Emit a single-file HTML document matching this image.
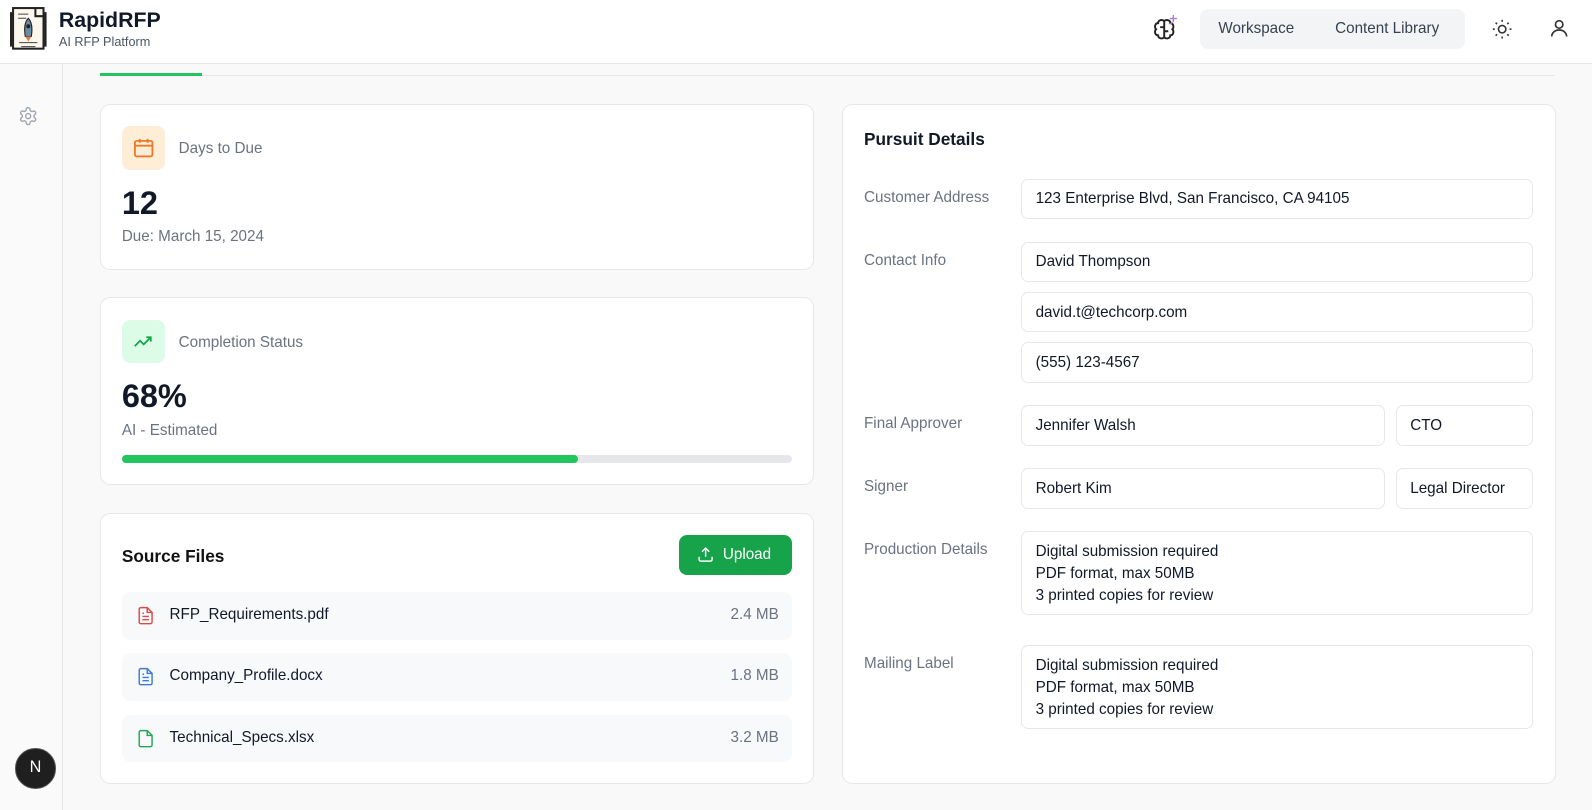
<!DOCTYPE html>
<html><head><meta charset="utf-8"><style>
*{box-sizing:border-box;margin:0;padding:0}
html,body{width:1592px;height:810px;overflow:hidden}
body{zoom:1.01531;font-family:"Liberation Sans",sans-serif;background:#f9f9f9;color:#111827;width:1568px;height:798px;position:relative}
.a{position:absolute}
.hdr{left:0;top:0;width:1568px;height:63px;background:#fff;border-bottom:1px solid #e5e7eb}
.side{left:0;top:63px;width:62px;height:735px;background:#fafafa;border-right:1px solid #e5e7eb}
.card{background:#fff;border:1px solid #e5e7eb;border-radius:10px}
.lbl{font-size:15px;color:#6b7280}
.inp{position:absolute;background:#fff;border:1px solid #e5e7eb;border-radius:7px;font-size:15px;color:#111827;padding:0 13px;display:flex;align-items:center}
.ta{align-items:flex-start;padding-top:9px;line-height:21.5px}
.row{position:absolute;left:120px;width:660px;height:47px;background:#f8f9fa;border-radius:8px;font-size:15px}
.row .n{position:absolute;left:47px;top:14px}
.row .s{position:absolute;right:13px;top:14px;color:#6b7280}
.row svg{position:absolute;left:14px;top:13px}
</style></head><body>
<div class="a hdr">
 <svg class="a" style="left:9px;top:4px" width="40" height="48" viewBox="0 0 40 48"><rect x="4" y="4" width="30" height="40" fill="#fbf7ec" stroke="#222" stroke-width="2"/><path d="M26 4v8h8" fill="none" stroke="#222" stroke-width="2"/><path d="M9 10h10M9 14h8M10 38h18M12 42h14" stroke="#444" stroke-width="1"/><path d="M19 14c4 4 4 12 3 18h-6c-1-6-1-14 3-18z" fill="#6a8aa8" stroke="#222"/><circle cx="19" cy="22" r="2" fill="#222"/><path d="M16 32l3 5 3-5" fill="#d9824b"/><path d="M2 8v34M36 8v34" stroke="#222" stroke-width="2"/></svg>
 <div class="a" style="left:58px;top:8px;font-size:21px;font-weight:bold">RapidRFP</div>
 <div class="a" style="left:58px;top:34px;font-size:12.5px;color:#4b5563">AI RFP Platform</div>
 <svg class="a" style="left:1133px;top:13px" width="30" height="30" viewBox="0 0 30 30" fill="none" stroke="#222" stroke-width="1.9"><path d="M14 8c-2-2-6-1-6 2-3 0-4 4-2 6-2 2-1 6 2 6 0 3 4 4 6 2V8zM14 8c2-2 6-1 6 2 3 0 4 4 2 6 2 2 1 6-2 6 0 3-4 4-6 2"/><path d="M10 14h4M14 18h4"/><path d="M23 2v7M19.5 5.5h7M20 11l2-2" stroke="#b07ad8" stroke-width="1.4"/></svg>
 <div class="a" style="left:1182px;top:9px;width:261px;height:39px;background:#f3f4f6;border-radius:8px;font-size:15px;color:#374151">
  <span class="a" style="left:18px;top:11px">Workspace</span><span class="a" style="left:133px;top:11px">Content Library</span></div>
 <svg class="a" style="left:1469px;top:18px" width="22" height="22" viewBox="0 0 24 24" fill="none" stroke="#333" stroke-width="1.7"><circle cx="12" cy="12" r="4"/><path d="M12 2v2M12 20v2M2 12h2M20 12h2M5 5l1.5 1.5M17.5 17.5L19 19M5 19l1.5-1.5M17.5 6.5L19 5"/></svg>
 <svg class="a" style="left:1525px;top:17px" width="22" height="22" viewBox="0 0 24 24" fill="none" stroke="#333" stroke-width="1.8"><circle cx="12" cy="8" r="4"/><path d="M4 21c0-4 3.5-7 8-7s8 3 8 7"/></svg>
</div>
<div class="a side"></div>
<svg class="a" style="left:18px;top:104px" width="20" height="20" viewBox="0 0 24 24" fill="none" stroke="#9ca3af" stroke-width="1.6"><circle cx="12" cy="12" r="3"/><path d="M12.2 2h-.4a2 2 0 0 0-2 2v.2a2 2 0 0 1-1 1.7l-.4.3a2 2 0 0 1-2 0l-.2-.1a2 2 0 0 0-2.7.7l-.2.4a2 2 0 0 0 .7 2.7l.2.1a2 2 0 0 1 1 1.7v.5a2 2 0 0 1-1 1.7l-.2.1a2 2 0 0 0-.7 2.7l.2.4a2 2 0 0 0 2.7.7l.2-.1a2 2 0 0 1 2 0l.4.3a2 2 0 0 1 1 1.7V20a2 2 0 0 0 2 2h.4a2 2 0 0 0 2-2v-.2a2 2 0 0 1 1-1.7l.4-.3a2 2 0 0 1 2 0l.2.1a2 2 0 0 0 2.7-.7l.2-.4a2 2 0 0 0-.7-2.7l-.2-.1a2 2 0 0 1-1-1.7v-.5a2 2 0 0 1 1-1.7l.2-.1a2 2 0 0 0 .7-2.7l-.2-.4a2 2 0 0 0-2.7-.7l-.2.1a2 2 0 0 1-2 0l-.4-.3a2 2 0 0 1-1-1.7V4a2 2 0 0 0-2-2z"/></svg>
<div class="a" style="left:15px;top:737px;width:40px;height:40px;border-radius:50%;background:#1f1f1f;border:1.5px solid #555;color:#fff;font-size:16px;text-align:center;line-height:37px">N</div>
<div class="a" style="left:98px;top:74px;width:1434px;height:1px;background:#e5e7eb"></div>
<div class="a" style="left:98px;top:72px;width:101px;height:3px;background:#22c55e"></div>

<div class="a card" style="left:98px;top:102px;width:704px;height:164px">
 <div class="a" style="left:21px;top:21px;width:43px;height:43px;background:#ffedd5;border-radius:8px"></div>
 <svg class="a" style="left:31px;top:31px" width="23" height="23" viewBox="0 0 24 24" fill="none" stroke="#ea7a2c" stroke-width="1.9"><rect x="3" y="5" width="18" height="16" rx="2"/><path d="M3 10h18M8 3v4M16 3v4"/></svg>
 <div class="a lbl" style="left:77px;top:35px">Days to Due</div>
 <div class="a" style="left:21px;top:79px;font-size:32px;font-weight:bold">12</div>
 <div class="a lbl" style="left:21px;top:122px">Due: March 15, 2024</div>
</div>
<div class="a card" style="left:98px;top:293px;width:704px;height:185px">
 <div class="a" style="left:21px;top:21px;width:43px;height:43px;background:#dcfce7;border-radius:8px"></div>
 <svg class="a" style="left:32px;top:32px" width="21" height="21" viewBox="0 0 24 24" fill="none" stroke="#16a34a" stroke-width="2"><path d="M2 17l6-6 4 4 8-8M15 7h5v5"/></svg>
 <div class="a lbl" style="left:77px;top:35px">Completion Status</div>
 <div class="a" style="left:21px;top:78px;font-size:32px;font-weight:bold">68%</div>
 <div class="a lbl" style="left:21px;top:122px">AI - Estimated</div>
 <div class="a" style="left:21px;top:154px;width:660px;height:8px;background:#e5e7eb;border-radius:4px"><div style="width:449px;height:8px;background:#22c55e;border-radius:4px"></div></div>
</div>
<div class="a card" style="left:98px;top:505px;width:704px;height:267px">
 <div class="a" style="left:21px;top:32px;font-size:17px;font-weight:bold;color:#111">Source Files</div>
 <div class="a" style="left:570px;top:21px;width:111px;height:39px;background:#16a34a;border-radius:8px;color:#fff;font-size:15px">
  <svg class="a" style="left:18px;top:11px" width="17" height="17" viewBox="0 0 24 24" fill="none" stroke="#fff" stroke-width="2"><path d="M21 15v4a2 2 0 0 1-2 2H5a2 2 0 0 1-2-2v-4M17 8l-5-5-5 5M12 3v12"/></svg>
  <span class="a" style="left:43px;top:11px">Upload</span></div>
</div>
<div class="row" style="top:583px"><svg width="19" height="21" viewBox="0 0 24 24" fill="none" stroke="#dc4a4a" stroke-width="1.8"><path d="M14 2H6a2 2 0 0 0-2 2v16a2 2 0 0 0 2 2h12a2 2 0 0 0 2-2V8z"/><path d="M14 2v6h6M8 13h8M8 17h8M8 9h2"/></svg><span class="n">RFP_Requirements.pdf</span><span class="s">2.4 MB</span></div>
<div class="row" style="top:643px"><svg width="19" height="21" viewBox="0 0 24 24" fill="none" stroke="#3b7bd8" stroke-width="1.8"><path d="M14 2H6a2 2 0 0 0-2 2v16a2 2 0 0 0 2 2h12a2 2 0 0 0 2-2V8z"/><path d="M14 2v6h6M8 13h8M8 17h8M8 9h2"/></svg><span class="n">Company_Profile.docx</span><span class="s">1.8 MB</span></div>
<div class="row" style="top:704px"><svg width="19" height="21" viewBox="0 0 24 24" fill="none" stroke="#22a855" stroke-width="1.8"><path d="M14 2H6a2 2 0 0 0-2 2v16a2 2 0 0 0 2 2h12a2 2 0 0 0 2-2V8z"/><path d="M14 2v6h6"/></svg><span class="n">Technical_Specs.xlsx</span><span class="s">3.2 MB</span></div>

<div class="a card" style="left:829px;top:102px;width:704px;height:670px"></div>
<div class="a" style="left:851px;top:127px;font-size:17px;font-weight:bold">Pursuit Details</div>
<div class="a lbl" style="left:851px;top:186px">Customer Address</div>
<div class="a lbl" style="left:851px;top:248px">Contact Info</div>
<div class="a lbl" style="left:851px;top:409px">Final Approver</div>
<div class="a lbl" style="left:851px;top:471px">Signer</div>
<div class="a lbl" style="left:851px;top:533px">Production Details</div>
<div class="a lbl" style="left:851px;top:645px">Mailing Label</div>
<div class="inp" style="left:1006px;top:176px;width:504px;height:40px">123 Enterprise Blvd, San Francisco, CA 94105</div>
<div class="inp" style="left:1006px;top:238px;width:504px;height:40px">David Thompson</div>
<div class="inp" style="left:1006px;top:288px;width:504px;height:39px">david.t@techcorp.com</div>
<div class="inp" style="left:1006px;top:337px;width:504px;height:40px">(555) 123-4567</div>
<div class="inp" style="left:1006px;top:399px;width:358px;height:40px">Jennifer Walsh</div>
<div class="inp" style="left:1375px;top:399px;width:135px;height:40px">CTO</div>
<div class="inp" style="left:1006px;top:461px;width:358px;height:40px">Robert Kim</div>
<div class="inp" style="left:1375px;top:461px;width:135px;height:40px">Legal Director</div>
<div class="inp ta" style="left:1006px;top:523px;width:504px;height:83px">Digital submission required<br>PDF format, max 50MB<br>3 printed copies for review</div>
<div class="inp ta" style="left:1006px;top:635px;width:504px;height:83px">Digital submission required<br>PDF format, max 50MB<br>3 printed copies for review</div>
</body></html>
